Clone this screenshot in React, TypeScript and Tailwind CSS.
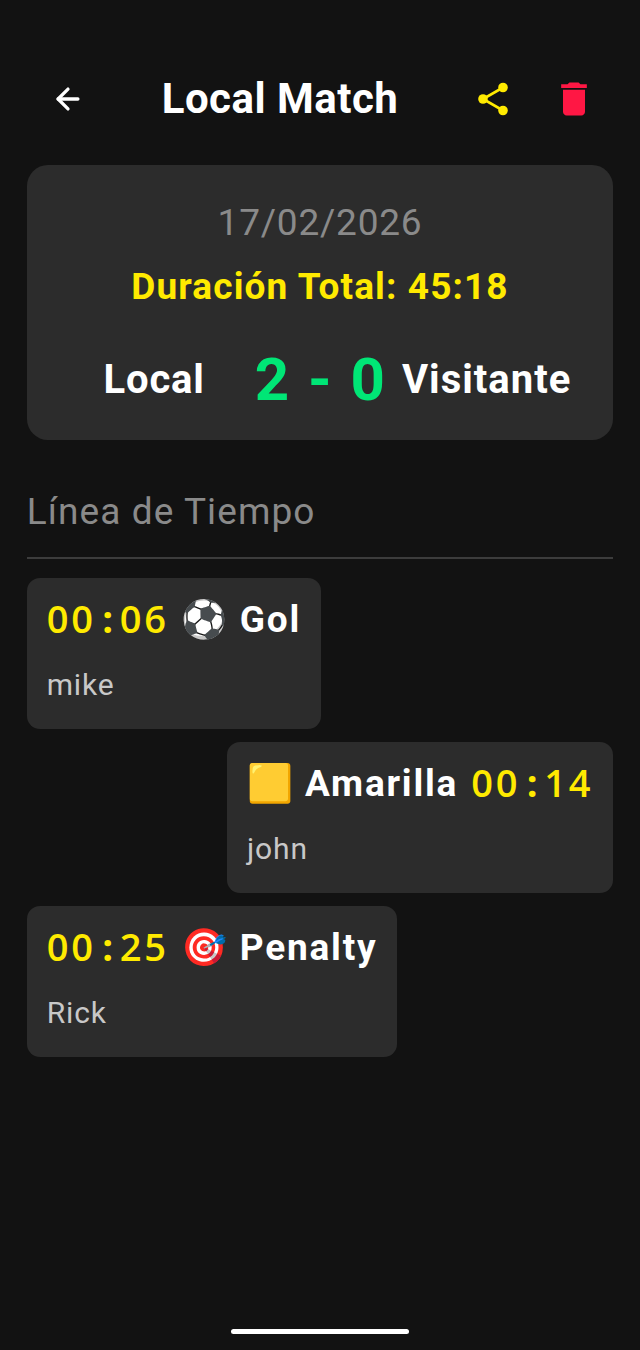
import React from "react";
import { ArrowLeft } from "lucide-react";

const Card = ({ children, name, self }: { children: React.ReactNode; name: string; self?: boolean }) => (
  <div className={`${self ? "self-end" : "self-start"} bg-[#2c2c2c] rounded-[13px] pl-[20px] pr-[20px] pt-[16px] h-[151px]`}>
    <div className="flex items-center h-[52px] gap-[13px] text-[37px] font-bold text-white tracking-[1.8px] whitespace-nowrap">{children}</div>
    <div className="text-[30px] text-[#c8c8c8] mt-[19px] leading-[40px] tracking-[0.9px]">{name}</div>
  </div>
);
const Time = ({ a, b }: { a: string; b: string }) => (
  <span className="flex items-center text-[#ffea00] font-[550] text-[38px] leading-[50px] pb-[4px] tracking-[2.8px]" style={{ fontFamily: "'Open Sans', sans-serif" }}>
    <span>{a}</span>
    <span className="w-[24px] text-center tracking-normal font-bold">:</span>
    <span>{b}</span>
  </span>
);
const Emoji = ({ c }: { c: string }) => <span className="w-[46px] text-center tracking-normal" style={{ fontFamily: "'Noto Color Emoji', sans-serif" }}>{c}</span>;

export default function App() {
  return (
    <div className="w-[640px] h-[1350px] bg-[#121212] relative overflow-hidden px-[26.67px]" style={{ fontFamily: "Roboto, sans-serif" }}>
      <header className="h-[165px] pt-[66px] flex items-start">
        <div className="h-[65px] w-full flex items-center relative">
          <ArrowLeft className="ml-[24px] text-white" size={34} strokeWidth={2.3} />
          <div className="ml-[77px] text-[42px] font-bold text-white leading-none tracking-[0.5px] whitespace-nowrap">Local Match</div>
          <svg className="ml-[74px]" width="44" height="44" viewBox="0 0 44 44" fill="#ffea00" stroke="#ffea00">
            <path d="M31 10.5 11 22l20 11.5" fill="none" strokeWidth="2.6" />
            <circle cx="31" cy="10.5" r="4.8" stroke="none" />
            <circle cx="11" cy="22" r="4.8" stroke="none" />
            <circle cx="31" cy="33.5" r="4.8" stroke="none" />
          </svg>
          <svg className="ml-[36px]" width="44" height="44" viewBox="0 0 24 24" fill="#ff1744"><path d="M6 19c0 1.1.9 2 2 2h8c1.1 0 2-.9 2-2V7H6v12zM19 4h-3.5l-1-1h-5l-1 1H5v2h14V4z"/></svg>
        </div>
      </header>
      <section className="h-[275px] bg-[#2c2c2c] rounded-[21px] flex flex-col items-center pt-[34px]">
        <div className="text-[37px] leading-[48px] text-[#8a8a8a] tracking-[0.8px]">17/02/2026</div>
        <div className="text-[37px] leading-[48px] mt-[16px] font-bold text-[#ffea00] tracking-[1.1px]">Duración Total: 45:18</div>
        <div className="w-full flex items-center mt-[33px] h-[72px] relative">
          <div className="w-[178px] text-right text-[40px] font-bold text-white tracking-[0.8px]">Local</div>
          <div className="ml-[50px] text-[60px] font-bold text-[#00e676] tracking-[2px] whitespace-nowrap">2 - 0</div>
          <div className="ml-[15px] text-[40px] font-bold text-white tracking-[1px]">Visitante</div>
        </div>
      </section>
      <div className="mt-[48px] text-[37px] leading-[48px] text-[#8a8a8a] tracking-[1.1px]">Línea de Tiempo</div>
      <div className="h-[2px] bg-[#3c3c3c] mt-[21px]" />
      <div className="flex flex-col gap-[13px] mt-[19px]">
        <Card name="mike"><Time a="00" b="06" /><span className="flex items-center gap-[12px]"><Emoji c="⚽" />Gol</span></Card>
        <Card name="john" self><span className="flex items-center gap-[12px]"><Emoji c="🟨" />Amarilla</span><Time a="00" b="14" /></Card>
        <Card name="Rick"><Time a="00" b="25" /><span className="flex items-center gap-[12px]"><Emoji c="🎯" />Penalty</span></Card>
      </div>
      <div className="absolute left-[231px] top-[1329px] w-[178px] h-[5px] rounded-full bg-white" />
    </div>
  );
}
